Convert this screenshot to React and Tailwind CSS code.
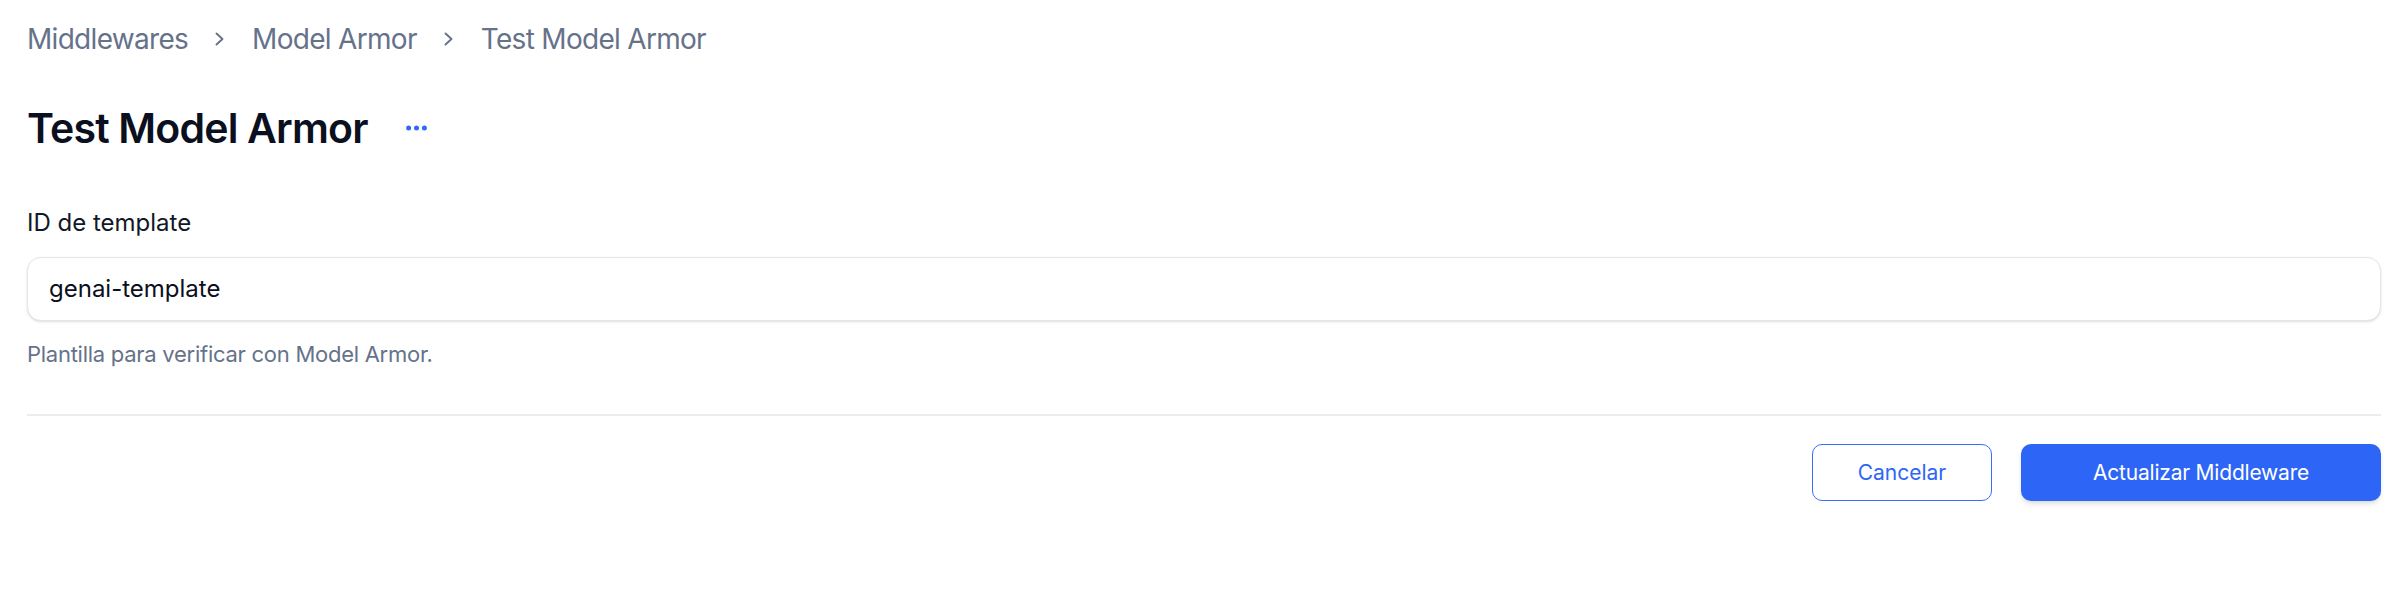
import React from "react";

function Chevron() {
  return (
    <svg width="14" height="14" viewBox="0 0 14 14" fill="none" className="shrink-0">
      <path d="M3.5 1.5 L9.5 7 L3.5 12.5" stroke="currentColor" strokeWidth="1.9" strokeLinecap="round" strokeLinejoin="round" />
    </svg>
  );
}

function Breadcrumbs({ items }) {
  return (
    <nav className="flex items-center gap-[25px] text-[28px] leading-[40px] tracking-[-0.025em] text-[#66728a]">
      {items.map((label, i) => (
        <React.Fragment key={label}>
          {i > 0 && <Chevron />}
          <span>{label}</span>
        </React.Fragment>
      ))}
    </nav>
  );
}

export default function App() {
  return (
    <div className="min-h-screen bg-white font-['Inter',sans-serif]">
      <div className="pl-[27px] pr-[3px] pt-[19px]">
        <Breadcrumbs items={["Middlewares", "Model Armor", "Test Model Armor"]} />

        <div className="mt-[45px] flex items-center">
          <h1 className="text-[41px] leading-[48px] font-semibold tracking-[-0.02em] text-[#0b1020]">
            Test Model Armor
          </h1>
          <button className="ml-[38px] flex items-center">
            <svg width="21" height="6" viewBox="0 0 21 6" fill="#2f6bf5">
              <circle cx="2.6" cy="3" r="2.5" />
              <circle cx="10.5" cy="3" r="2.5" />
              <circle cx="18.4" cy="3" r="2.5" />
            </svg>
          </button>
        </div>

        <div className="mt-[55px]">
          <label className="block text-[24px] leading-[32px] text-[#111827]">ID de template</label>
          <div className="mt-[18px] flex h-[64px] items-center rounded-[14px] border border-[#e4e6ec] bg-white px-[21px] shadow-sm">
            <span className="text-[24px] text-[#0b1020]">genai-template</span>
          </div>
          <p className="mt-[18px] text-[22px] leading-[30px] tracking-[-0.012em] text-[#66728a]">
            Plantilla para verificar con Model Armor.
          </p>
        </div>

        <div className="mt-[45px] h-[2px] bg-[#ececef]" />

        <div className="mt-[28px] flex justify-end gap-[29px]">
          <button className="h-[57px] w-[180px] rounded-[10px] border-[1.5px] border-[#3b6ef6] bg-white text-[21px] text-[#2e66f5]">
            Cancelar
          </button>
          <button className="h-[57px] w-[360px] rounded-[10px] bg-[#2d66f6] text-[21px] tracking-[-0.01em] text-white shadow-md">
            Actualizar Middleware
          </button>
        </div>
      </div>
    </div>
  );
}
